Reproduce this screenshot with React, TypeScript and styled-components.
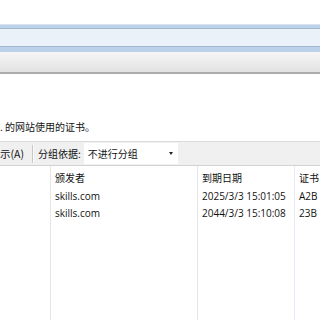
import React from "react";
import styled, { createGlobalStyle } from "styled-components";

const Global = createGlobalStyle`
  html, body { margin: 0; padding: 0; background: #fff; }
  body { width: 320px; height: 320px; overflow: hidden; font-family: "Noto Sans CJK SC", "Noto Sans", sans-serif; color: #111; }
`;

const Page = styled.div`
  width: 320px;
  height: 320px;
  overflow: hidden;
  display: flex;
  flex-direction: column;
`;

const TopSpace = styled.div`
  height: 24px;
  flex: none;
`;

const AddressBand = styled.div`
  flex: none;
  background: #bcd2ea;
  border-top: 1px solid #d6e2ef;
  padding: 3px 0 5px;
`;

const AddressField = styled.div`
  height: 17px;
  background: #eaf1f9;
  border-top: 1px solid #a4b7cc;
  border-bottom: 1px solid #a4b7cc;
`;

const MenuBar = styled.div`
  flex: none;
  height: 20px;
  background: linear-gradient(#f6f6f6, #e2e2e2);
  border-bottom: 2px solid #acacac;
`;

const Blank = styled.div`
  flex: none;
  height: 44px;
`;

const Intro = styled.div`
  flex: none;
  height: 17px;
  line-height: 17px;
  font-size: 10px;
  white-space: nowrap;
`;

const Gap = styled.div`
  flex: none;
  height: 6px;
`;

const CommandBar = styled.div`
  flex: none;
  height: 23px;
  background: #f0f0f0;
  border-top: 1px solid #dadada;
  border-bottom: 1px solid #d2d2d2;
  display: flex;
  align-items: center;
  font-size: 10px;
  white-space: nowrap;
`;

const CmdLabel = styled.span<{ $pad: number; $size: number }>`
  padding-left: ${(p) => p.$pad}px;
  font-size: ${(p) => p.$size}px;
`;

const Sep = styled.div`
  width: 1px;
  height: 18px;
  background: #c8c8c8;
  margin-left: 8px;
  border-right: 1px solid #fafafa;
`;

const Combo = styled.div`
  margin-left: 3px;
  width: 94px;
  height: 21px;
  background: #fff;
  display: flex;
  align-items: center;
  justify-content: space-between;
  padding: 0 4px;
  box-sizing: border-box;
  font-size: 10px;
`;

const Caret = styled.span`
  width: 0;
  height: 0;
  border-left: 2.5px solid transparent;
  border-right: 2.5px solid transparent;
  border-top: 3px solid #222;
  margin-right: 1px;
`;

const List = styled.div`
  flex: 1;
  display: grid;
  grid-template-columns: 50px 147px 97px 1fr;
  grid-template-rows: 21px;
  grid-auto-rows: 17px;
  align-content: start;
  position: relative;
  font-size: 10px;
  white-space: nowrap;
`;

const Cell = styled.div`
  padding-left: 5px;
  display: flex;
  align-items: center;
  overflow: hidden;
`;

const HeaderCell = styled(Cell)`
  padding-top: 1px;
`;

const Column = styled.div<{ $left: number; $color: string }>`
  position: absolute;
  top: 0;
  bottom: 0;
  left: ${(p) => p.$left}px;
  width: 1px;
  background: ${(p) => p.$color};
`;

const Latin = styled.span`
  font-family: "Open Sans", "Noto Sans", sans-serif;
  font-size: 10px;
`;

const rows = [
  ["skills.com", "2025/3/3 15:01:05", "A2B"],
  ["skills.com", "2044/3/3 15:10:08", "23B"],
];

export default function App() {
  return (
    <Page>
      <Global />
      <TopSpace />
      <AddressBand>
        <AddressField />
      </AddressBand>
      <MenuBar />
      <Blank />
      <Intro>. 的网站使用的证书。</Intro>
      <Gap />
      <CommandBar>
        <CmdLabel $pad={0} $size={10.5}>示(A)</CmdLabel>
        <Sep />
        <CmdLabel $pad={4} $size={10}>分组依据:</CmdLabel>
        <Combo>
          <span>不进行分组</span>
          <Caret />
        </Combo>
      </CommandBar>
      <List>
        <Column $left={50} $color="#e6e6e6" />
        <Column $left={197} $color="#e6e6e6" />
        <Column $left={294} $color="#e3ecf6" />
        <HeaderCell />
        <HeaderCell>颁发者</HeaderCell>
        <HeaderCell>到期日期</HeaderCell>
        <HeaderCell>证书</HeaderCell>
        {rows.map((r, i) => (
          <React.Fragment key={i}>
            <Cell />
            <Cell><Latin>{r[0]}</Latin></Cell>
            <Cell><Latin>{r[1]}</Latin></Cell>
            <Cell><Latin>{r[2]}</Latin></Cell>
          </React.Fragment>
        ))}
      </List>
    </Page>
  );
}
